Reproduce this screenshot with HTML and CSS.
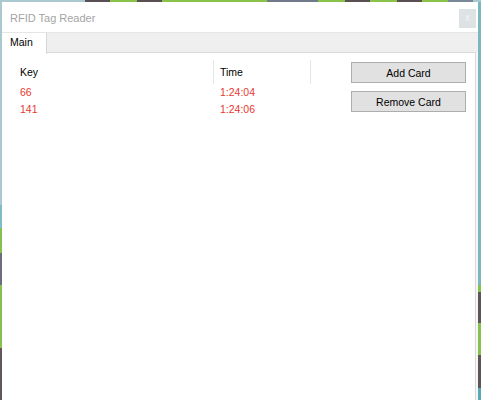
FILE: index.html
```html
<!DOCTYPE html>
<html>
<head>
<meta charset="utf-8">
<title>RFID Tag Reader</title>
<link rel="stylesheet" href="styles.css">
</head>
<body>
<div class="window">
  <div class="titlebar">
    <span class="title">RFID Tag Reader</span>
    <span class="close">x</span>
  </div>
  <div class="tabstrip">
    <div class="tab">Main</div>
  </div>
  <div class="panel">
    <div class="list">
      <div class="list-head">
        <div class="col col-key">Key</div>
        <div class="col col-time">Time</div>
      </div>
      <div class="row">
        <div class="cell col-key">66</div>
        <div class="cell col-time">1:24:04</div>
      </div>
      <div class="row">
        <div class="cell col-key">141</div>
        <div class="cell col-time">1:24:06</div>
      </div>
    </div>
    <div class="buttons">
      <button class="btn">Add Card</button>
      <button class="btn">Remove Card</button>
    </div>
  </div>
</div>
</body>
</html>
```

FILE: styles.css
```css
html, body {
  margin: 0;
  height: 100%;
  overflow: hidden;
}

body {
  box-sizing: border-box;
  padding: 2px 3px 0 2px;
  display: flex;
  flex-direction: column;
  font-family: "Liberation Sans", Arial, sans-serif;
  font-size: 10.5px;
  color: #000;
  background:
    linear-gradient(to right,
      #a9c8d0 0, #a9c8d0 85px,
      #5a5053 85px, #5a5053 110px,
      #8bc34a 110px, #8bc34a 137px,
      #5a5053 137px, #5a5053 162px,
      #8bc34a 162px, #8bc34a 267px,
      #707a8a 267px, #707a8a 318px,
      #8bc34a 318px, #8bc34a 345px,
      #5a5053 345px, #5a5053 370px,
      #8bc34a 370px, #8bc34a 397px,
      #5a5053 397px, #5a5053 422px,
      #8bc34a 422px, #8bc34a 448px,
      #7a8898 448px, #7a8898 473px,
      #a9c8d0 473px) top left / 100% 2px no-repeat,
    linear-gradient(to bottom,
      #7ab7bf 0, #7ab7bf 285px,
      #86c04e 285px, #86c04e 292px,
      #5e5558 292px, #5e5558 323px,
      #86c04e 323px, #86c04e 355px,
      #5e5558 355px, #5e5558 388px,
      #5aa7b5 388px) top right / 3px 100% no-repeat,
    linear-gradient(to bottom,
      #a9c8d0 0, #a9c8d0 205px,
      #7fbcc4 205px, #7fbcc4 228px,
      #86c04e 228px, #86c04e 253px,
      #6c6e80 253px, #6c6e80 285px,
      #86c04e 285px, #86c04e 348px,
      #64575a 348px) top left / 2px 100% no-repeat,
    #a9c8d0;
}

.window {
  flex: 1;
  display: flex;
  flex-direction: column;
  background: #f6f6f6;
}

.titlebar {
  height: 30px;
  display: flex;
  align-items: flex-start;
  justify-content: space-between;
  background: #fff;
}

.title {
  margin: 9px 0 0 8px;
  font-size: 11px;
  line-height: 14px;
  color: #a4a4a4;
}

.close {
  margin: 7px 2px 0 0;
  width: 17px;
  height: 19px;
  background: #dde2e5;
  color: #f4f6f7;
  font-size: 10px;
  line-height: 18px;
  text-align: center;
}

.tabstrip {
  height: 20px;
  display: flex;
  background: #eeefee;
  border-top: 1px solid #e6e6e6;
  box-sizing: border-box;
}

.tab {
  width: 45px;
  height: 21px;
  box-sizing: border-box;
  padding: 3px 0 0 8px;
  background: #fff;
  border-right: 1px solid #d6d6d6;
  line-height: 13px;
  position: relative;
  z-index: 1;
}

.panel {
  flex: 1;
  display: flex;
  align-items: flex-start;
  margin-right: 2px;
  padding: 7px 0 0 12px;
  background: #fff;
  border-top: 1px solid #d9d9d9;
  border-right: 1px solid #d9d9d9;
}

.list {
  width: 297px;
}

.list-head {
  display: flex;
  height: 24px;
}

.col {
  box-sizing: border-box;
  padding-left: 6px;
  line-height: 24px;
  border-right: 1px solid #e3e5e6;
}

.col-key {
  width: 200px;
}

.col-time {
  width: 97px;
}

.row {
  display: flex;
  height: 17px;
  color: #e8392f;
}

.cell {
  box-sizing: border-box;
  padding-left: 6px;
  line-height: 17px;
}

.buttons {
  margin: 2px 0 0 40px;
  display: flex;
  flex-direction: column;
  gap: 8px;
}

.btn {
  width: 115px;
  height: 21px;
  margin: 0;
  padding: 0;
  background: #e1e1e1;
  border: 1px solid #adadad;
  border-radius: 0;
  font-family: "Liberation Sans", Arial, sans-serif;
  font-size: 10.5px;
  color: #000;
}
```
